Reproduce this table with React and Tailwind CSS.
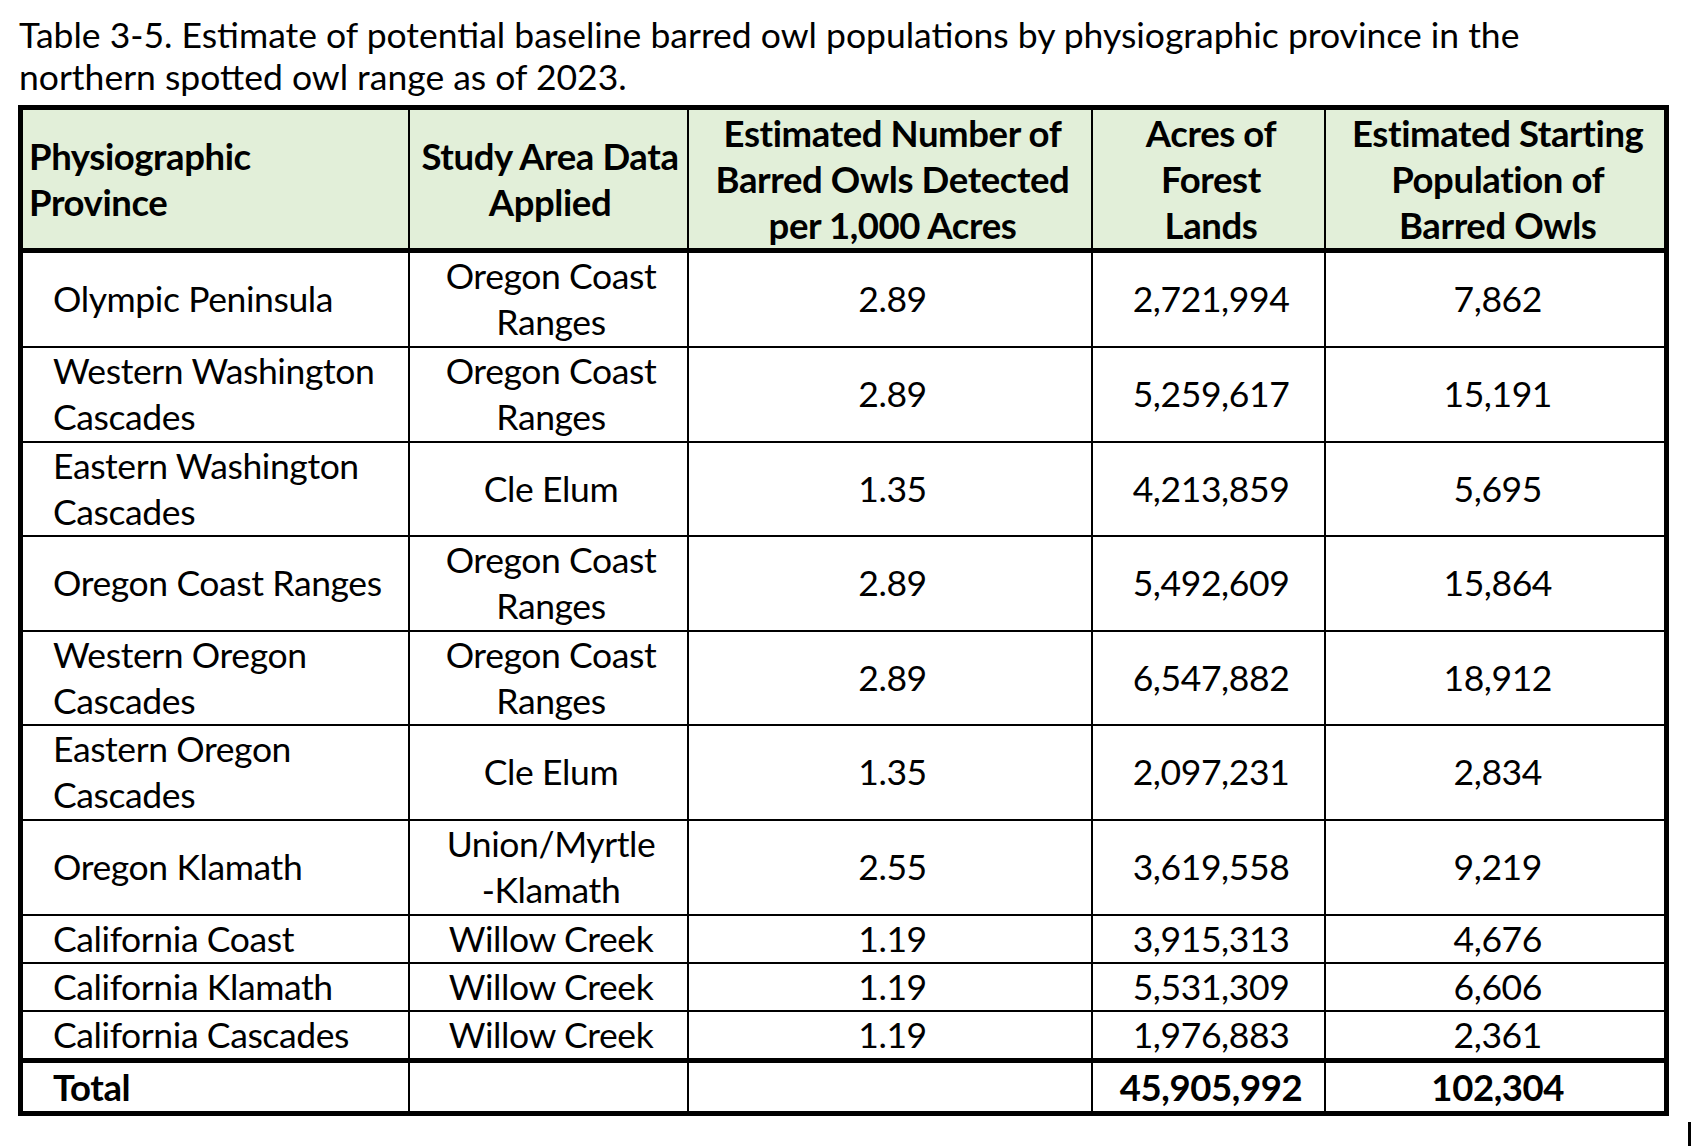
import React from 'react';

const rows = [
  { province: ['Olympic Peninsula'], study: ['Oregon Coast', 'Ranges'], rate: '2.89', acres: '2,721,994', owls: '7,862', h: 'h-[96px]' },
  { province: ['Western Washington', 'Cascades'], study: ['Oregon Coast', 'Ranges'], rate: '2.89', acres: '5,259,617', owls: '15,191', h: 'h-[95px]' },
  { province: ['Eastern Washington', 'Cascades'], study: ['Cle Elum'], rate: '1.35', acres: '4,213,859', owls: '5,695', h: 'h-[94px]' },
  { province: ['Oregon Coast Ranges'], study: ['Oregon Coast', 'Ranges'], rate: '2.89', acres: '5,492,609', owls: '15,864', h: 'h-[95px]' },
  { province: ['Western Oregon', 'Cascades'], study: ['Oregon Coast', 'Ranges'], rate: '2.89', acres: '6,547,882', owls: '18,912', h: 'h-[94px]' },
  { province: ['Eastern Oregon', 'Cascades'], study: ['Cle Elum'], rate: '1.35', acres: '2,097,231', owls: '2,834', h: 'h-[95px]' },
  { province: ['Oregon Klamath'], study: ['Union/Myrtle', '-Klamath'], rate: '2.55', acres: '3,619,558', owls: '9,219', h: 'h-[95px]' },
  { province: ['California Coast'], study: ['Willow Creek'], rate: '1.19', acres: '3,915,313', owls: '4,676', h: 'h-[47px]' },
  { province: ['California Klamath'], study: ['Willow Creek'], rate: '1.19', acres: '5,531,309', owls: '6,606', h: 'h-[48px]' },
  { province: ['California Cascades'], study: ['Willow Creek'], rate: '1.19', acres: '1,976,883', owls: '2,361', h: 'h-[48px]' },
];

const Lines = ({ items }) => items.map((t, i) => <div key={i}>{t}</div>);

export default function App() {
  return (
    <div className="w-[1692px] h-[1146px] bg-white text-black overflow-hidden font-['Lato','Liberation_Sans',sans-serif]">
      {/* Caption */}
      <div className="pl-[19px] pt-[14px] text-[35.5px] leading-[42px] whitespace-nowrap">
        <div>Table 3-5. Estimate of potential baseline barred owl populations by physiographic province in the</div>
        <div>northern spotted owl range as of 2023.</div>
      </div>

      {/* Table */}
      <div className="pl-[18px] mt-[7px]">
        <table className="table-fixed border-collapse border-[5px] border-black w-[1646px] text-[35.5px] leading-[46px] tracking-[-0.4px]">
          <colgroup>
            <col className="w-[388px]" />
            <col className="w-[279px]" />
            <col className="w-[404px]" />
            <col className="w-[233px]" />
            <col className="w-[342px]" />
          </colgroup>
          <thead>
            <tr className="h-[143px] bg-[#e2efd9] border-b-[5px] border-black text-[36.5px]">
              <th className="border-2 border-black text-left align-middle px-[6px] font-bold">
                <div>Physiographic</div>
                <div>Province</div>
              </th>
              <th className="border-2 border-black text-center align-middle pl-[4px] font-bold">
                <div>Study Area Data</div>
                <div>Applied</div>
              </th>
              <th className="border-2 border-black text-center align-middle pl-[6px] font-bold">
                <div>Estimated Number of</div>
                <div>Barred Owls Detected</div>
                <div>per 1,000 Acres</div>
              </th>
              <th className="border-2 border-black text-center align-middle pl-[6px] font-bold">
                <div>Acres of</div>
                <div>Forest</div>
                <div>Lands</div>
              </th>
              <th className="border-2 border-black text-center align-middle pl-[6px] font-bold">
                <div>Estimated Starting</div>
                <div>Population of</div>
                <div>Barred Owls</div>
              </th>
            </tr>
          </thead>
          <tbody>
            {rows.map((r, i) => (
              <tr key={i} className={r.h}>
                <td className="border-2 border-black pl-[30px] text-left align-middle">
                  <Lines items={r.province} />
                </td>
                <td className="border-2 border-black pl-[6px] text-center align-middle">
                  <Lines items={r.study} />
                </td>
                <td className="border-2 border-black pl-[6px] text-center align-middle">{r.rate}</td>
                <td className="border-2 border-black pl-[6px] text-center align-middle">{r.acres}</td>
                <td className="border-2 border-black pl-[6px] text-center align-middle">{r.owls}</td>
              </tr>
            ))}
            <tr className="h-[53px] border-t-[5px] border-black font-bold text-[36.5px]">
              <td className="border-2 border-black pl-[30px] text-left align-middle">Total</td>
              <td className="border-2 border-black"></td>
              <td className="border-2 border-black"></td>
              <td className="border-2 border-black pl-[6px] text-center align-middle">45,905,992</td>
              <td className="border-2 border-black pl-[6px] text-center align-middle">102,304</td>
            </tr>
          </tbody>
        </table>
      </div>

      {/* stray mark bottom right */}
      <div className="flex justify-end pr-[1px] mt-[6px]">
        <div className="w-[3px] h-[30px] bg-black"></div>
      </div>
    </div>
  );
}
